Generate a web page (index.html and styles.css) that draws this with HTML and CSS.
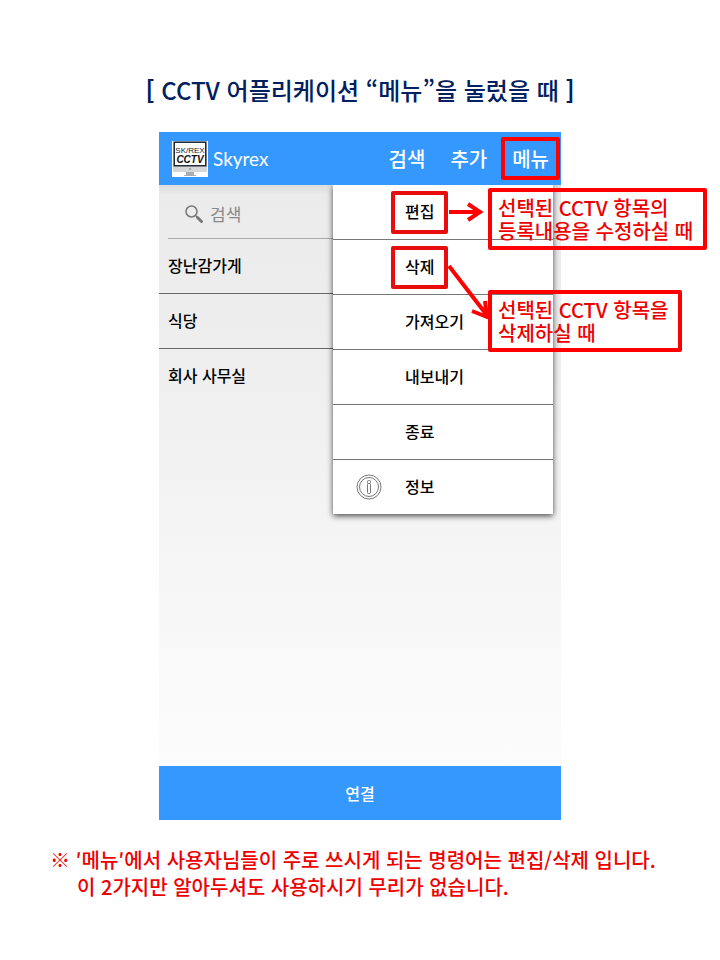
FILE: index.html
```html
<!DOCTYPE html>
<html lang="ko">
<head>
    <meta charset="UTF-8">
    <meta name="viewport" content="width=device-width, initial-scale=1.0">
    <title>Skyrex CCTV</title>
    <link rel="stylesheet" href="styles.css">
</head>
<body>
    <h1 class="title"><b>[</b> CCTV 어플리케이션 “메뉴”을 눌렀을 때 <b>]</b></h1>

    <div class="phone">
        <header class="topbar">
            <svg class="logo" width="36" height="36" viewBox="0 0 36 36">
                <rect width="36" height="36" fill="#fff"/>
                <rect x="1" y="0" width="34" height="31" rx="1" fill="#d4d6d8"/>
                <rect x="1.5" y="0.5" width="33" height="25" fill="#222b35"/>
                <rect x="3" y="2" width="30" height="22" fill="#fff"/>
                <text class="logo-top" x="18" y="12" text-anchor="middle">SK/REX</text>
                <text class="logo-bottom" x="18" y="22" text-anchor="middle">CCTV</text>
                <circle cx="18" cy="28" r="1" fill="#999"/>
                <path d="M14 31h8v3h2v1H12v-1h2z" fill="#a9adb0"/>
            </svg>
            <span class="brand">Skyrex</span>
            <nav class="actions">
                <button class="action">검색</button>
                <button class="action">추가</button>
                <button class="action marked">메뉴</button>
            </nav>
        </header>

        <main class="screen">
            <div class="search">
                <svg width="20" height="20" viewBox="0 0 20 20" fill="none">
                    <circle cx="7.5" cy="7.5" r="5.5" stroke="#777" stroke-width="1.5"/>
                    <path d="M11.5 11.5l2 2" stroke="#777" stroke-width="1.5"/>
                    <path d="M13.5 13.5l4 4" stroke="#777" stroke-width="3" stroke-linecap="round"/>
                </svg>
                <input class="search-input" type="text" placeholder="검색" aria-label="검색">
            </div>
            <ul class="list">
                <li>장난감가게</li>
                <li>식당</li>
                <li>회사 사무실</li>
            </ul>

            <ul class="menu">
                <li>
                    <span class="icon"></span>
                    <button class="item marked">편집</button>
                    <svg class="arrow-right" width="36" height="24" viewBox="0 0 36 24">
                        <path d="M0 12h28M19 4l12 8-12 8"/>
                    </svg>
                    <p class="note note-edit">선택된 CCTV 항목의<br>등록내용을 수정하실 때</p>
                </li>
                <li>
                    <span class="icon"></span>
                    <button class="item marked">삭제</button>
                    <svg class="arrow-down" width="46" height="64" viewBox="0 0 46 64">
                        <path d="M2 6l37 48M25 51l15 6-2-16"/>
                    </svg>
                    <p class="note note-delete">선택된 CCTV 항목을<br>삭제하실 때</p>
                </li>
                <li><span class="icon"></span><button class="item">가져오기</button></li>
                <li><span class="icon"></span><button class="item">내보내기</button></li>
                <li><span class="icon"></span><button class="item">종료</button></li>
                <li>
                    <span class="icon">
                        <svg width="26" height="26" viewBox="0 0 26 26" fill="none" stroke="#777">
                            <circle cx="13" cy="13" r="12"/>
                            <circle cx="13" cy="13" r="9.5"/>
                            <rect x="11.5" y="6.5" width="3" height="3" rx="1"/>
                            <rect x="11.5" y="9.5" width="3" height="10" rx="1"/>
                        </svg>
                    </span>
                    <button class="item">정보</button>
                </li>
            </ul>
        </main>

        <button class="connect">연결</button>
    </div>

    <p class="footnote">※ ′메뉴′에서 사용자님들이 주로 쓰시게 되는 명령어는 편집/삭제 입니다.<br>
    <span class="indent">이 2가지만 알아두셔도 사용하시기 무리가 없습니다.</span></p>
</body>
</html>
```

FILE: styles.css
```css
* {
    box-sizing: border-box;
}

body, h1, p, ul {
    margin: 0;
    padding: 0;
}

body {
    padding: 72px 0 48px;
    background: #fff;
    font-family: "Noto Sans CJK KR", sans-serif;
    font-weight: 500;
}

ul {
    list-style: none;
}

button, input {
    font-family: inherit;
    font-weight: inherit;
    background: none;
    border: none;
    outline: none;
}

.title {
    color: #002060;
    font-size: 24px;
    line-height: 36px;
    font-weight: 500;
    text-align: center;
}

.phone {
    max-width: 402px;
    margin: 24px auto 0;
}

/* header */

.topbar {
    display: flex;
    align-items: center;
    height: 53px;
    padding: 0 1px 0 13px;
    background: #3598fe;
    color: #fff;
}

.logo-top {
    font: 8px "Liberation Sans", sans-serif;
    fill: #222;
}

.logo-bottom {
    font: italic bold 10px "Liberation Sans", sans-serif;
    fill: #111;
}

.brand {
    margin-left: 5px;
    font-family: Lato, sans-serif;
    font-size: 19px;
    font-weight: 400;
}

.actions {
    display: flex;
    gap: 3px;
    margin-left: auto;
}

.action {
    height: 43px;
    padding: 0 7px;
    border: 4px solid transparent;
    color: #fff;
    font-size: 20px;
}

.marked {
    border-color: #f00;
    border-radius: 2px;
}

/* list */

.screen {
    position: relative;
    min-height: 581px;
    background: linear-gradient(#ddd, #ebebeb 10px, #eee 160px, #f5f5f5 360px, #fcfcfc);
}

.search {
    display: flex;
    align-items: center;
    gap: 6px;
    height: 54px;
    margin-left: 9px;
    padding: 4px 0 0 16px;
    border-bottom: 1px solid #aaa;
}

.search-input {
    width: 120px;
    padding: 0;
    font-size: 17px;
    font-weight: 400;
}

.search-input::placeholder {
    color: #888;
}

.list li {
    height: 55px;
    padding-left: 9px;
    border-bottom: 1px solid #666;
    font-size: 16px;
    line-height: 52px;
}

.list li:last-child {
    border-bottom: none;
}

/* popup menu */

.menu {
    position: absolute;
    top: 0;
    right: 8px;
    width: 220px;
    background: #fff;
    box-shadow: 0 2px 6px rgba(0,0,0,0.7);
    clip-path: inset(0 -200px -20px -20px);
}

.menu li {
    position: relative;
    display: flex;
    align-items: center;
    height: 55px;
    padding-left: 23px;
    border-bottom: 1px solid #777;
}

.menu li:last-child {
    height: 54px;
    border-bottom: none;
}

.icon {
    display: flex;
    width: 35px;
}

.item {
    height: 43px;
    padding: 0 10px 2px;
    border: 4px solid transparent;
    color: #000;
    font-size: 16px;
}

.item.marked {
    border-color: #e80c0c;
}

/* notes */

.note {
    position: absolute;
    left: 155px;
    z-index: 1;
    padding: 4px 10px 4px 6px;
    border: 4px solid #f00;
    border-radius: 2px;
    color: #e00;
    font-size: 20px;
    line-height: 23px;
    white-space: nowrap;
}

.note-edit {
    top: 3px;
}

.note-delete {
    top: 50px;
}

.arrow-right, .arrow-down {
    position: absolute;
    z-index: 1;
    left: 116px;
    top: 15px;
    fill: none;
    stroke: #f00;
    stroke-width: 4;
}

.arrow-down {
    left: 114px;
    top: 20px;
}

/* footer */

.connect {
    display: block;
    width: 100%;
    height: 54px;
    background: #3598fe;
    color: #fff;
    font-size: 16px;
}

.footnote {
    margin: 26px 0 0 50px;
    color: #e00;
    font-size: 20px;
    line-height: 27px;
}

.indent {
    padding-left: 27px;
}
```
